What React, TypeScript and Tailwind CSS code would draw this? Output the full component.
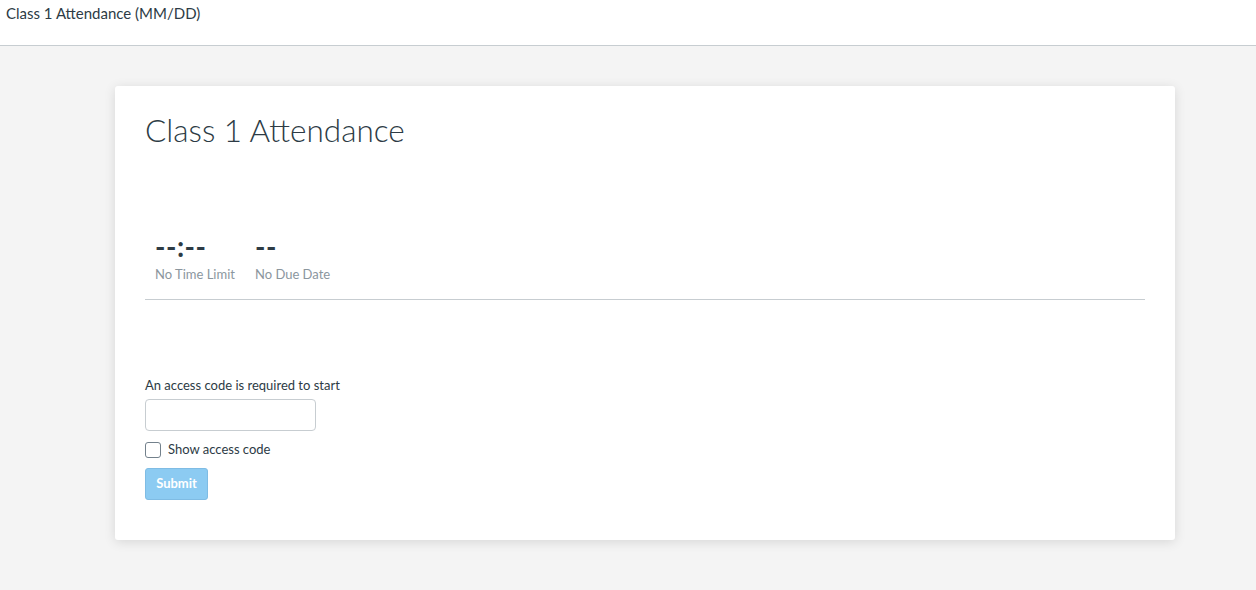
import React from "react";

export default function App() {
  return (
    <div className="min-h-[590px] bg-[#f4f4f4] font-['Lato','Noto_Sans',sans-serif] text-[#2d3b45]">
      <header className="h-[46px] border-b border-[#c7cdd1] bg-white px-[6px] pt-[2px] text-[15px]">
        Class 1 Attendance (MM/DD)
      </header>

      <div className="pl-[115px] pt-[40px]">
        <div className="w-[1060px] rounded-[3px] bg-white px-[30px] pb-[40px] pt-[24px] shadow-[0_2px_12px_rgba(0,0,0,0.12)]">
          <h1 className="text-[31.5px] font-light leading-[40px]">Class 1 Attendance</h1>

          <div className="mt-[80px] flex gap-[20px] px-[10px] pb-[16px]">
            <div className="flex flex-col">
              <span className="text-[28px] font-bold leading-[32px] tracking-[0.5px] text-[#2d3b45]">--:--</span>
              <span className="mt-[3px] text-[13px] leading-[18px] text-[#8b969e]">No Time Limit</span>
            </div>
            <div className="flex flex-col">
              <span className="text-[28px] font-bold leading-[32px] tracking-[0.5px] text-[#2d3b45]">--</span>
              <span className="mt-[3px] text-[13px] leading-[18px] text-[#8b969e]">No Due Date</span>
            </div>
          </div>
          <hr className="border-t border-[#c7cdd1]" />

          <div className="mt-[76px] text-[13px]">
            <label className="block leading-[18px]">An access code is required to start</label>
            <input
              type="text"
              className="mt-[5px] block h-[32px] w-[171px] rounded-[4px] border border-[#c7cdd1] bg-white px-2 outline-none"
            />
            <label className="mt-[9px] flex items-center gap-[7px] text-[13px]">
              <span className="inline-block h-[16px] w-[16px] rounded-[3px] border border-[#73818c] bg-white" />
              Show access code
            </label>
            <button className="mt-[8px] h-[32px] w-[63px] rounded-[3px] border border-[#7fbce4] bg-[#8ccbf2] text-[13px] font-bold text-white">
              Submit
            </button>
          </div>
        </div>
      </div>
    </div>
  );
}
